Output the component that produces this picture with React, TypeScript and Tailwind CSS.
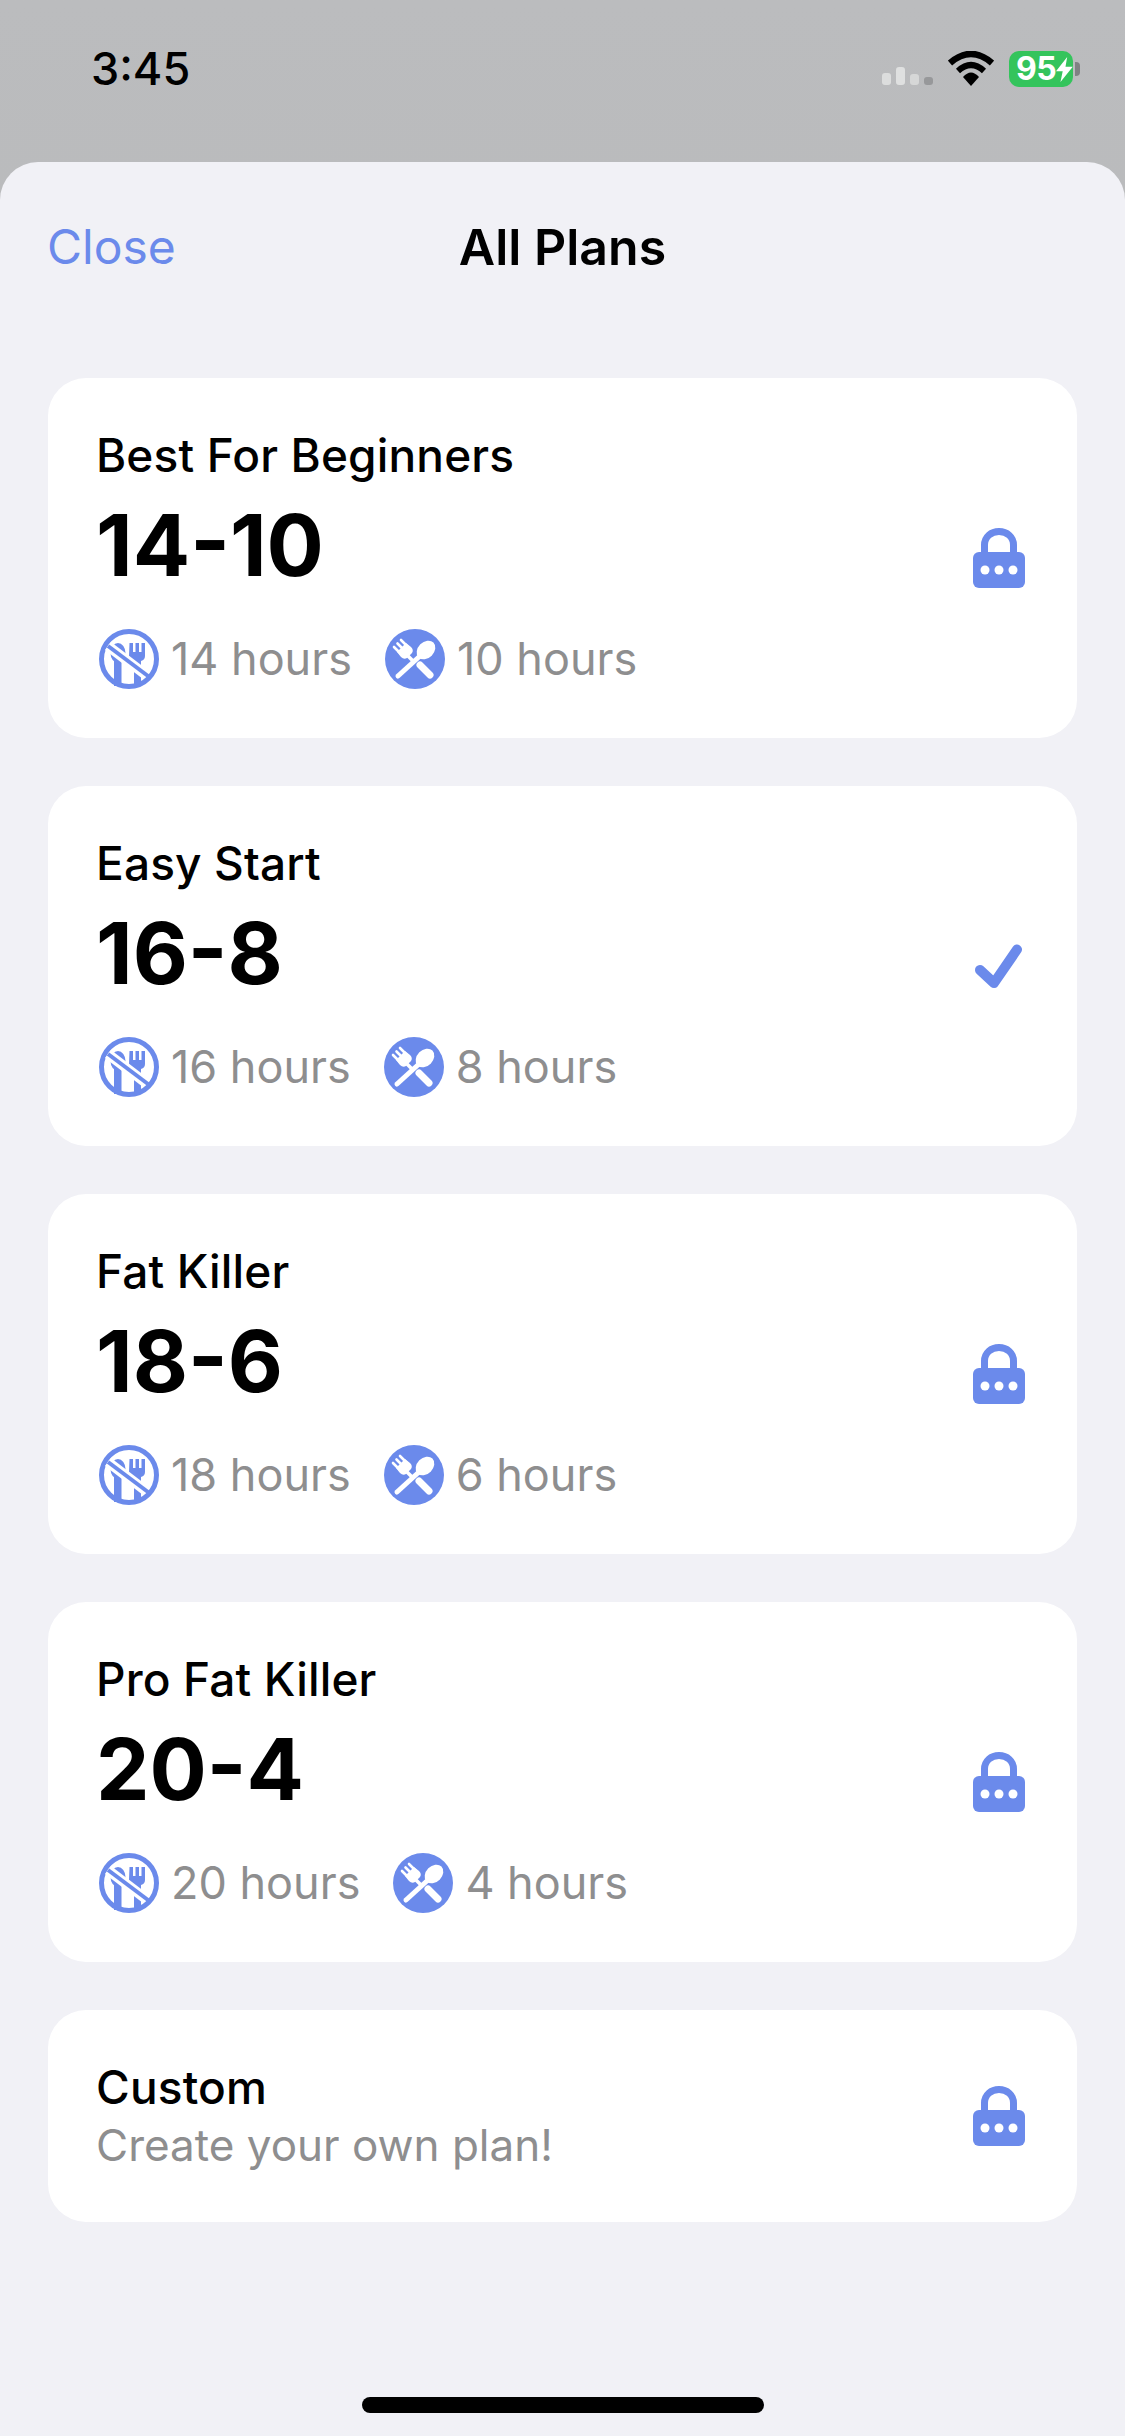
const BLUE = "#6b8aeb";

function NoEatIcon() {
  return (
    <svg width="60" height="60" viewBox="0 0 60 60" className="ml-[3px] shrink-0">
      <circle cx="30" cy="30" r="27.500" fill="#fff" stroke={BLUE} strokeWidth="5" />
      <ellipse cx="19" cy="24" rx="7.500" ry="10" fill={BLUE} />
      <rect x="15" y="28" width="7.500" height="29" fill={BLUE} />
      <path d="M30.500 14h3.500v9h2.500v-9h3.500v9h2.500v-9h3.500v13q0 4-4 5v25h-7V32q-5-1-5-5z" fill={BLUE} />
      <path d="M9 17L47 46" stroke="#fff" strokeWidth="10" />
      <path d="M9 17L49 47" stroke={BLUE} strokeWidth="4" />
    </svg>
  );
}

function EatIcon() {
  return (
    <svg width="60" height="60" viewBox="0 0 60 60" className="shrink-0">
      <circle cx="30" cy="30" r="30" fill={BLUE} />
      <ellipse cx="41" cy="21" rx="8" ry="10.500" transform="rotate(45 41 21)" fill="#fff" />
      <path d="M35 27L13 47" stroke="#fff" strokeWidth="5" strokeLinecap="round" />
      <path d="M9 18l7 7M12.500 14.500l7 7M16 11l7 7" stroke="#fff" strokeWidth="2.600" strokeLinecap="round" />
      <path d="M12 23l4 5q3 3 6 1l5-5q2-3-1-6l-5-4z" fill="#fff" />
      <path d="M23 27l5 5" stroke="#fff" strokeWidth="3.500" />
      <path d="M35 36L45 46" stroke="#fff" strokeWidth="7" strokeLinecap="round" />
    </svg>
  );
}

function LockIcon() {
  return (
    <svg width="52" height="60" viewBox="0 0 52 60" className="shrink-0">
      <path d="M11.500 27V17C11.500 9 18 3.500 26 3.500S40.500 9 40.500 17V27" fill="none" stroke={BLUE} strokeWidth="7" />
      <rect x="0" y="24" width="52" height="36" rx="6" fill={BLUE} />
      <circle cx="12" cy="42" r="4.500" fill="#fff" />
      <circle cx="26" cy="42" r="4.500" fill="#fff" />
      <circle cx="40" cy="42" r="4.500" fill="#fff" />
    </svg>
  );
}

function CheckIcon() {
  return (
    <svg width="52" height="48" viewBox="0 0 52 48" className="shrink-0">
      <path d="M7 28L21 41L44 7.500" fill="none" stroke={BLUE} strokeWidth="10" strokeLinecap="round" strokeLinejoin="round" />
    </svg>
  );
}

function Plan({ title, big, fast, eat, status, gap }: { title: string; big: string; fast: string; eat: string; status: "lock" | "check"; gap: string }) {
  return (
    <div className="flex h-[360px] items-center justify-between rounded-[38px] bg-white pl-[48px] pr-[52px]">
      <div>
        <div className="text-[46px] leading-[56px] font-medium tracking-[0.15px] text-black">{title}</div>
        <div className="mt-[23px] text-[85px] leading-[80px] font-bold text-black">{big}</div>
        <div className="mt-[43px] flex h-[60px] items-center text-[45px] text-[#8e8e8f]">
          <NoEatIcon />
          <span className="ml-[12px]">{fast}</span>
          <span className={gap}><EatIcon /></span>
          <span className="ml-[12px]">{eat}</span>
        </div>
      </div>
      {status === "lock" ? <LockIcon /> : <CheckIcon />}
    </div>
  );
}

export default function App() {
  return (
    <div className="flex h-[2436px] w-[1125px] flex-col overflow-hidden bg-gradient-to-b from-[#bbbcbe] to-[#aeafae] font-['Inter',sans-serif]">
      <div className="flex h-[162px] shrink-0 items-start justify-between pl-[91px] pr-[52px] pt-[44px]">
        <span className="text-[45px] leading-[50px] font-medium text-black">3:45</span>
        <div className="flex items-center pt-[7px]">
          <div className="flex items-end gap-[5px] pt-[14px]">
            <div className="h-[12px] w-[9px] rounded-[3px] bg-[#dcdddd]" />
            <div className="h-[18px] w-[9px] rounded-[3px] bg-[#dfe0e0]" />
            <div className="h-[11px] w-[9px] rounded-[3px] bg-[#d6d7d7]" />
            <div className="h-[8px] w-[9px] rounded-[3px] bg-[#97989a]" />
          </div>
          <svg width="46" height="36" viewBox="0 0 46 36" className="ml-[15px]">
            <path d="M2 12Q23-6 44 12" fill="none" stroke="#000" strokeWidth="6.500" />
            <path d="M10 20Q23 8 36 20" fill="none" stroke="#000" strokeWidth="6" />
            <path d="M15 26Q23 17 31 26L23 35z" fill="#000" />
          </svg>
          <div className="relative ml-[15px] flex h-[36px] w-[64px] items-center rounded-[10px] bg-[#34c45c] pl-[7px] text-[32px] leading-[36px] font-bold tracking-[-0.5px] text-white">
            <span>95</span>
            <svg width="19" height="25" viewBox="0 0 15 28" preserveAspectRatio="none"><path d="M10 0L0 16h6L4 28l11-17H8.500z" fill="#fff" /></svg>
            <div className="absolute left-[66px] top-[11px] h-[14px] w-[5px] rounded-r-[4px] bg-[#808183]" />
          </div>
        </div>
      </div>
      <div className="flex flex-1 flex-col rounded-t-[38px] bg-[#f1f1f6] px-[48px]">
        <div className="relative flex h-[170px] shrink-0 items-center justify-center">
          <span className="absolute left-[-1px] top-[56px] text-[48px] leading-[58px] text-[#6b8aeb]">Close</span>
          <span className="text-[50px] leading-[58px] font-semibold text-black">All Plans</span>
        </div>
        <div className="mt-[46px] flex flex-col gap-[48px]">
          <Plan title="Best For Beginners" big="14-10" fast="14 hours" eat="10 hours" status="lock" gap="ml-[33px]" />
          <Plan title="Easy Start" big="16-8" fast="16 hours" eat="8 hours" status="check" gap="ml-[33px]" />
          <Plan title="Fat Killer" big="18-6" fast="18 hours" eat="6 hours" status="lock" gap="ml-[33px]" />
          <Plan title="Pro Fat Killer" big="20-4" fast="20 hours" eat="4 hours" status="lock" gap="ml-[33px]" />
          <div className="flex h-[212px] items-center justify-between rounded-[38px] bg-white pl-[48px] pr-[52px]">
            <div>
              <div className="text-[46px] leading-[56px] font-medium tracking-[0.15px] text-black">Custom</div>
              <div className="mt-[2px] text-[44px] leading-[56px] text-[#8e8e8f]">Create your own plan!</div>
            </div>
            <LockIcon />
          </div>
        </div>
        <div className="mx-auto mt-auto mb-[23px] h-[16px] w-[402px] rounded-full bg-black" />
      </div>
    </div>
  );
}
